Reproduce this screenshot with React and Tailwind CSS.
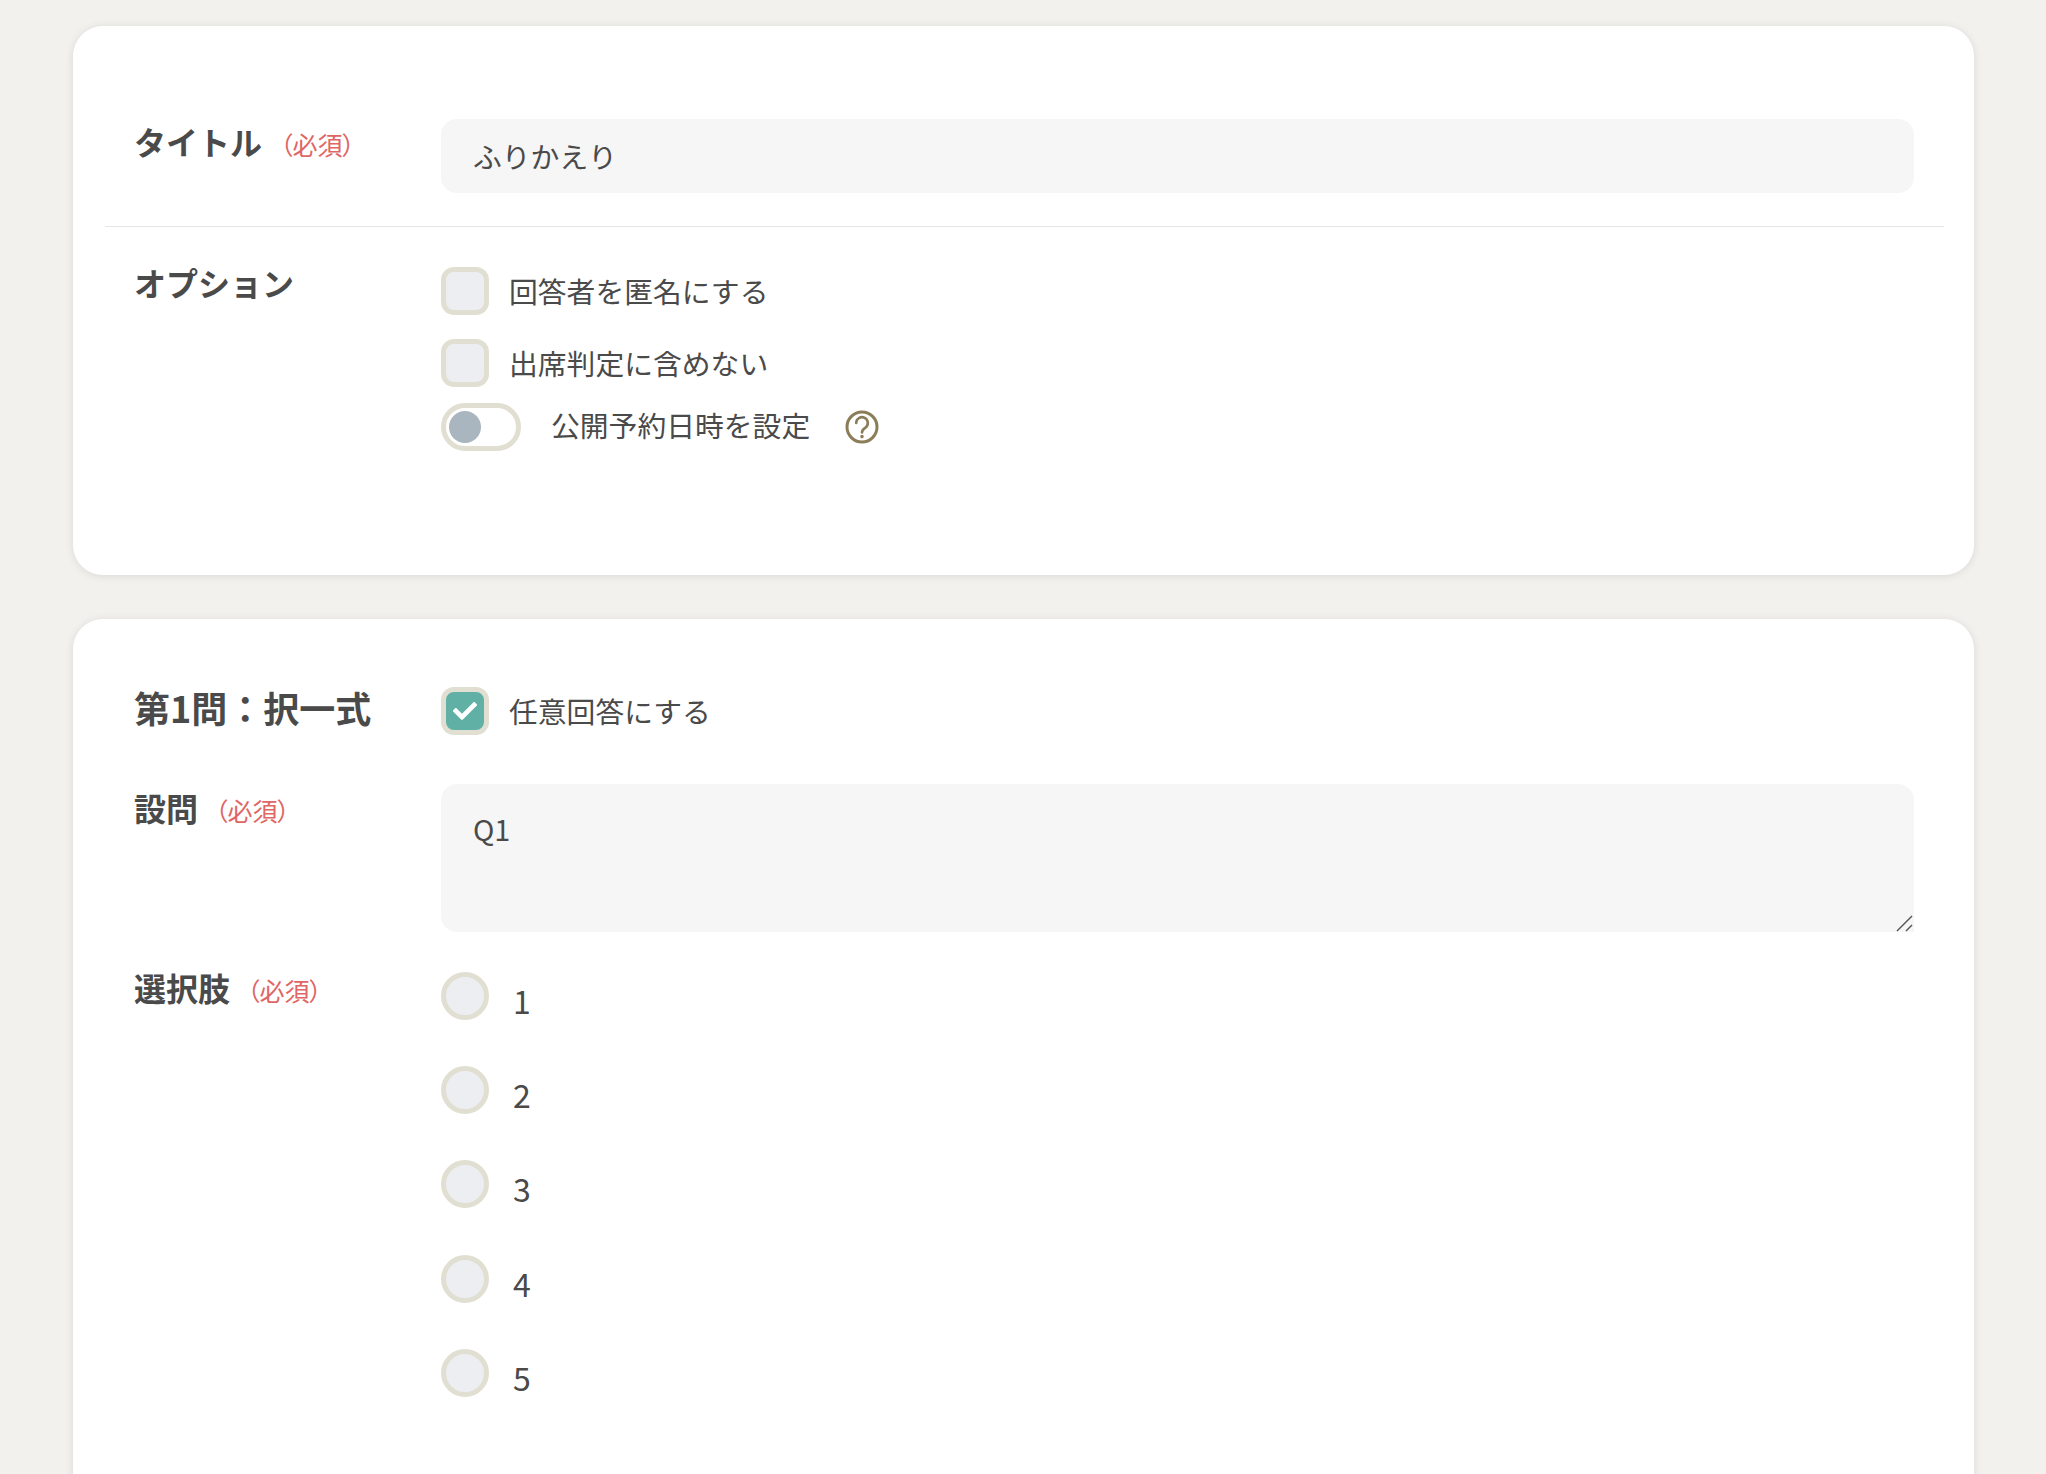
import React from 'react';
import { FaCheck } from 'react-icons/fa';

const Required = ({ className = '' }) => (
    <span className={`text-[25px] font-normal text-[#e06666] [font-feature-settings:'palt'] ${className}`}>（必須）</span>
);

const Checkbox = ({ checked = false }) => (
    <span
        className={`flex h-12 w-12 shrink-0 items-center justify-center rounded-[13px] border-[5px] border-[#e0dfd1] ${
            checked ? 'bg-[#61b0a5]' : 'bg-[#eceef2]'
        }`}
    >
        {checked && <FaCheck className="text-[24px] text-white" />}
    </span>
);

const CheckRow = ({ label, checked, className = '' }) => (
    <label className={`flex items-center gap-5 ${className}`}>
        <Checkbox checked={checked} />
        <span className="text-[28.8px] leading-[48px]">{label}</span>
    </label>
);

const Choice = ({ value }) => (
    <div className="flex h-[94.2px] items-start">
        <span className="h-12 w-12 shrink-0 rounded-full border-[5px] border-[#e0dfd1] bg-[#eceef2]" />
        <span className="ml-[24px] mt-[4px] text-[32px] leading-[48px]">{value}</span>
    </div>
);

export default function App() {
    return (
        <div className="h-[1474px] overflow-hidden bg-[#f2f1ed] pl-[73px] pt-[26px] text-[#4a4a4a] [font-family:'Noto_Sans_CJK_JP','Noto_Sans',sans-serif]">
            {/* 基本情報 */}
            <section className="h-[549px] w-[1901px] rounded-[30px] bg-white pl-[32px] pr-[30px] pt-[93px] shadow-[0_1px_8px_rgba(0,0,0,0.1)]">
                <div className="flex pl-[29px]">
                    <div className="flex w-[307px] shrink-0 items-baseline">
                        <span className="text-[32px] font-bold leading-[44px]">タイトル</span>
                        <Required className="ml-[18px]" />
                    </div>
                    <input
                        readOnly
                        value="ふりかえり"
                        className="h-[74px] w-[1473px] shrink-0 rounded-[16px] bg-[#f6f6f6] px-8 pb-[2px] text-[28.8px] text-[#4a4a4a] outline-none"
                    />
                </div>
                <div className="mt-[33px] border-t border-[#e6e6e6]" />
                <div className="mt-[40px] flex pl-[29px]">
                    <div className="w-[307px] shrink-0 text-[32px] font-bold leading-[30px]">オプション</div>
                    <div className="flex flex-col">
                        <CheckRow label="回答者を匿名にする" />
                        <CheckRow label="出席判定に含めない" className="mt-6" />
                        <div className="mt-4 flex h-12 items-center">
                            <span className="flex h-12 w-[80px] items-center rounded-full border-[5px] border-[#e0dfd1] bg-white pl-[3px]">
                                <span className="h-8 w-8 rounded-full bg-[#a9b5bf]" />
                            </span>
                            <span className="mb-[4px] ml-[30px] text-[28.8px] leading-[48px]">公開予約日時を設定</span>
                            {/* ヘルプアイコン */}
                            <svg className="ml-[35px]" width="34" height="34" viewBox="0 0 34 34" fill="none" stroke="#8b7d58" strokeWidth="3" strokeLinecap="round">
                                <circle cx="17" cy="17" r="15" />
                                <path strokeWidth="2.6" d="M11.2 13a5.8 5.8 0 1 1 9 4.8c-2.2 1.4-3.2 2.3-3.2 4.6" />
                                <circle cx="17" cy="26.6" r="0.8" fill="#8b7d58" strokeWidth="2" />
                            </svg>
                        </div>
                    </div>
                </div>
            </section>

            {/* 第1問 */}
            <section className="mt-[44px] w-[1901px] rounded-[30px] bg-white pb-[60px] pl-[61px] pt-[68px] shadow-[0_1px_8px_rgba(0,0,0,0.1)]">
                <div className="flex h-12 items-start">
                    <h2 className="w-[307px] shrink-0 text-[36px] font-bold leading-[40px]">第1問：択一式</h2>
                    <CheckRow label="任意回答にする" checked />
                </div>
                <div className="mt-[49px] flex">
                    <div className="flex w-[307px] shrink-0 items-baseline">
                        <span className="text-[32px] font-bold leading-[46px]">設問</span>
                        <Required className="ml-[17px]" />
                    </div>
                    <div className="relative h-[148px] w-[1473px] shrink-0">
                        <textarea
                            readOnly
                            defaultValue="Q1"
                            className="block h-full w-full resize-none rounded-[16px] rounded-br-none bg-[#f6f6f6] px-8 py-[25px] text-[28.8px] leading-[40px] text-[#4a4a4a] outline-none"
                        />
                        {/* リサイズハンドル */}
                        <svg className="absolute bottom-0 right-0" width="18" height="18" viewBox="0 0 18 18" fill="none" stroke="#555" strokeWidth="1.4">
                            <path d="M1 17L16 2" />
                            <path d="M10 17L16 11" />
                        </svg>
                    </div>
                </div>
                <div className="mt-[40px] flex">
                    <div className="flex w-[307px] shrink-0 items-baseline">
                        <span className="text-[32px] font-bold leading-[30px]">選択肢</span>
                        <Required className="ml-[17px]" />
                    </div>
                    <div>
                        {[1, 2, 3, 4, 5].map((n) => (
                            <Choice key={n} value={n} />
                        ))}
                    </div>
                </div>
            </section>
        </div>
    );
}
